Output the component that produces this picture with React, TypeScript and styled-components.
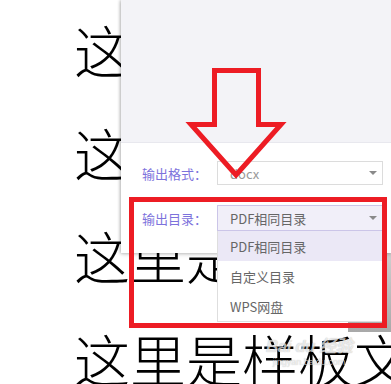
import React from 'react';
import styled, { createGlobalStyle } from 'styled-components';

const GlobalStyle = createGlobalStyle`
  html, body {
    margin: 0;
    padding: 0;
    background: #fff;
  }
  body {
    font-family: 'Noto Sans CJK SC', 'Noto Sans', sans-serif;
  }
`;

const Page = styled.div`
  position: relative;
  width: 391px;
  height: 384px;
  overflow: hidden;
  background: #fff;
`;

// the document behind the dialog
const Doc = styled.div`
  padding: 0 0 0 74px;
  margin-top: -3px;
  font-family: 'Noto Sans CJK SC', serif;
  font-weight: 300;
  font-size: 56px;
  line-height: 103px;
  color: #000;
`;

const DocLine = styled.div`
  white-space: nowrap;
`;

const GreyBlock = styled.div`
  position: absolute;
  left: 348px;
  top: 253px;
  width: 43px;
  height: 79px;
  background: linear-gradient(#cfcfcf, #a9a9a9);
`;

const Panel = styled.div`
  position: absolute;
  top: 0;
  left: 121px;
  width: 270px;
  height: 253px;
  display: flex;
  flex-direction: column;
  background: #fff;
  box-shadow: -1px 0 3px rgba(0, 0, 0, 0.25), 0 2px 4px rgba(0, 0, 0, 0.12);
`;

const Preview = styled.div`
  height: 142px;
  background: #f3f3f7;
  border-bottom: 1px solid #e8e8ee;
`;

const Form = styled.div`
  display: flex;
  flex-direction: column;
  gap: 20px;
  padding: 18px 8px 0 21px;
`;

const FieldRow = styled.div`
  display: flex;
  align-items: center;
`;

const Label = styled.span`
  width: 75px;
  font-size: 13px;
  color: #7d72dc;
`;

const SelectWrap = styled.div`
  position: relative;
  width: 166px;
`;

const SelectBox = styled.div<{ $open?: boolean }>`
  box-sizing: border-box;
  height: ${(p) => (p.$open ? 26 : 24)}px;
  display: flex;
  align-items: center;
  padding: 0 12px;
  font-size: 13px;
  color: ${(p) => (p.$open ? '#666' : '#999')};
  background: ${(p) => (p.$open ? '#f1eff9' : '#fff')};
  border: 1px solid ${(p) => (p.$open ? '#cbc5e8' : '#dcdcdc')};
`;

const Caret = styled.span`
  position: absolute;
  right: 6px;
  top: 50%;
  margin-top: -2px;
  border-left: 4px solid transparent;
  border-right: 4px solid transparent;
  border-top: 4px solid #8a8a8a;
`;

const Menu = styled.div`
  position: absolute;
  top: 100%;
  left: 0;
  right: 0;
  background: #fff;
  border: 1px solid #dedede;
  border-top: none;
`;

const MenuItem = styled.div<{ $active?: boolean }>`
  height: 30px;
  display: flex;
  align-items: center;
  padding-left: 12px;
  font-size: 13px;
  color: #666;
  background: ${(p) => (p.$active ? '#ebe8f6' : '#fff')};
`;

const Highlight = styled.div`
  position: absolute;
  left: 129px;
  top: 197px;
  width: 258px;
  height: 131px;
  box-sizing: border-box;
  border: 5px solid #ed1c24;
`;

const ArrowSvg = styled.svg`
  position: absolute;
  left: 0;
  top: 0;
  pointer-events: none;
`;

const Watermark = styled.div`
  position: absolute;
  left: 266px;
  top: 332px;
  display: flex;
  flex-direction: column;
  align-items: center;
  color: rgba(255, 255, 255, 0.7);
  text-shadow: 0 0 1px rgba(0, 0, 0, 0.3);
  font-family: 'Liberation Sans', 'Noto Sans CJK SC', sans-serif;
`;

const MarkTitle = styled.span`
  font-size: 17px;
  font-weight: bold;
  font-style: italic;
  letter-spacing: -0.5px;
`;

const MarkUrl = styled.span`
  font-size: 9px;
`;

const lines = ['这里是样板文字', '这里是样板文字', '这里是样板文字', '这里是样板文字'];

export default function App() {
  return (
    <Page>
      <GlobalStyle />
      <Doc>
        {lines.map((t, i) => (
          <DocLine key={i}>{t}</DocLine>
        ))}
      </Doc>
      <GreyBlock />
      <Panel>
        <Preview />
        <Form>
          <FieldRow>
            <Label>输出格式：</Label>
            <SelectWrap>
              <SelectBox>docx</SelectBox>
              <Caret />
            </SelectWrap>
          </FieldRow>
          <FieldRow>
            <Label>输出目录：</Label>
            <SelectWrap>
              <SelectBox $open>PDF相同目录</SelectBox>
              <Caret />
              <Menu>
                <MenuItem $active>PDF相同目录</MenuItem>
                <MenuItem>自定义目录</MenuItem>
                <MenuItem>WPS网盘</MenuItem>
              </Menu>
            </SelectWrap>
          </FieldRow>
        </Form>
      </Panel>
      <Watermark>
        <MarkTitle>Bai du 经验</MarkTitle>
        <MarkUrl>jingyan.baidu.com</MarkUrl>
      </Watermark>
      <Highlight />
      <ArrowSvg width="391" height="384" viewBox="0 0 391 384">
        <polygon
          points="214.5,70.5 258.5,70.5 258.5,124.5 281,124.5 236,175 191,124.5 214.5,124.5"
          fill="none"
          stroke="#ed1c24"
          strokeWidth="5"
          strokeLinejoin="miter"
        />
      </ArrowSvg>
    </Page>
  );
}
